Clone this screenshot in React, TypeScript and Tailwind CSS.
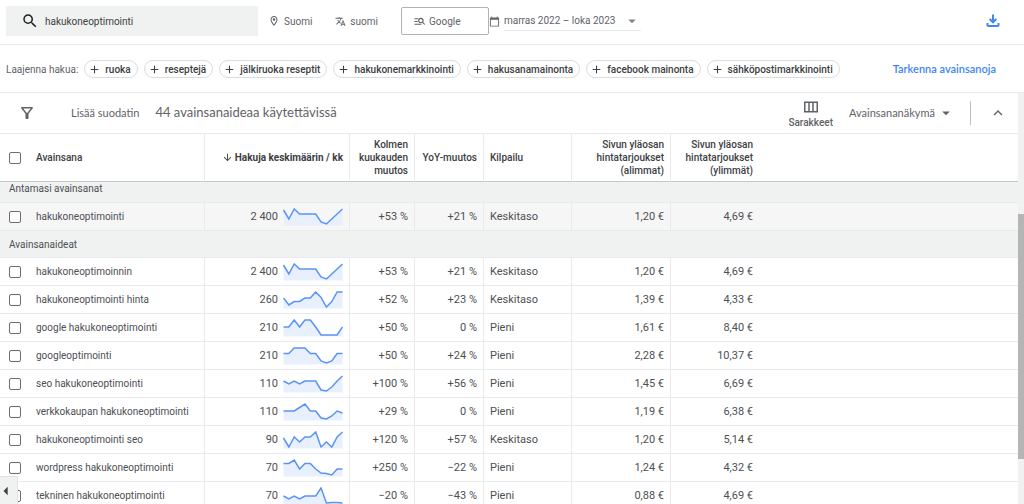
import clsx from "clsx";
import {
  MdAdd,
  MdArrowDownward,
  MdArrowDropDown,
  MdArrowLeft,
  MdCalendarToday,
  MdExpandLess,
  MdOutlineFilterAlt,
  MdOutlineLocationOn,
  MdSearch,
  MdTranslate,
} from "react-icons/md";

interface Keyword {
  name: string;
  searches: string;
  threeMonths: string;
  yoy: string;
  competition: string;
  lowBid: string;
  highBid: string;
  trend: number[];
}

const suggestions = [
  "ruoka",
  "reseptejä",
  "jälkiruoka reseptit",
  "hakukonemarkkinointi",
  "hakusanamainonta",
  "facebook mainonta",
  "sähköpostimarkkinointi",
];

const provided: Keyword[] = [
  {
    name: "hakukoneoptimointi",
    searches: "2 400",
    threeMonths: "+53 %",
    yoy: "+21 %",
    competition: "Keskitaso",
    lowBid: "1,20 €",
    highBid: "4,69 €",
    trend: [2, 11, 1, 6, 6, 6, 6, 14, 16, 11, 6, 1],
  },
];

const ideas: Keyword[] = [
  {
    name: "hakukoneoptimoinnin",
    searches: "2 400",
    threeMonths: "+53 %",
    yoy: "+21 %",
    competition: "Keskitaso",
    lowBid: "1,20 €",
    highBid: "4,69 €",
    trend: [2, 11, 1, 6, 6, 6, 6, 14, 16, 11, 6, 1],
  },
  {
    name: "hakukoneoptimointi hinta",
    searches: "260",
    threeMonths: "+52 %",
    yoy: "+23 %",
    competition: "Keskitaso",
    lowBid: "1,39 €",
    highBid: "4,33 €",
    trend: [7, 14, 10.5, 10.5, 7, 7, 1, 6.5, 16, 10.5, 1, 1],
  },
  {
    name: "google hakukoneoptimointi",
    searches: "210",
    threeMonths: "+50 %",
    yoy: "0 %",
    competition: "Pieni",
    lowBid: "1,61 €",
    highBid: "8,40 €",
    trend: [8, 8, 1, 8, 1, 1, 8, 16, 16, 16, 16, 8],
  },
  {
    name: "googleoptimointi",
    searches: "210",
    threeMonths: "+50 %",
    yoy: "+24 %",
    competition: "Pieni",
    lowBid: "2,28 €",
    highBid: "10,37 €",
    trend: [6.5, 6.5, 1, 1, 1, 6.5, 6.5, 14, 16, 14, 6.5, 6.5],
  },
  {
    name: "seo hakukoneoptimointi",
    searches: "110",
    threeMonths: "+100 %",
    yoy: "+56 %",
    competition: "Pieni",
    lowBid: "1,45 €",
    highBid: "6,69 €",
    trend: [6, 9, 6, 9, 6, 6, 6, 15, 16, 12, 6, 1],
  },
  {
    name: "verkkokaupan hakukoneoptimointi",
    searches: "110",
    threeMonths: "+29 %",
    yoy: "0 %",
    competition: "Pieni",
    lowBid: "1,19 €",
    highBid: "6,38 €",
    trend: [8, 8, 8, 4.5, 1, 8, 8, 15, 16, 13, 8, 10],
  },
  {
    name: "hakukoneoptimointi seo",
    searches: "90",
    threeMonths: "+120 %",
    yoy: "+57 %",
    competition: "Keskitaso",
    lowBid: "1,20 €",
    highBid: "5,14 €",
    trend: [7, 16, 6, 11, 6, 6, 1, 16, 11, 16, 6, 1],
  },
  {
    name: "wordpress hakukoneoptimointi",
    searches: "70",
    threeMonths: "+250 %",
    yoy: "−22 %",
    competition: "Pieni",
    lowBid: "1,24 €",
    highBid: "4,32 €",
    trend: [4.5, 4.5, 1, 10, 4.5, 4.5, 10, 14, 14.5, 16, 10, 10],
  },
  {
    name: "tekninen hakukoneoptimointi",
    searches: "70",
    threeMonths: "−20 %",
    yoy: "−43 %",
    competition: "Pieni",
    lowBid: "0,88 €",
    highBid: "4,69 €",
    trend: [9, 12, 9, 12, 9, 9, 9, 1, 16, 15.5, 15.5, 16],
  },
];

const Sparkline = ({ values }: { values: number[] }) => {
  const step = 59 / (values.length - 1);
  const points = values.map((v, i) => `${i * step + 0.5},${v}`).join(" ");

  return (
    <svg width="60" height="18" viewBox="0 0 60 18" className="shrink-0">
      <polygon points={`0.5,17.5 ${points} 59.5,17.5`} fill="#e8f0fe" />
      <polyline points={points} fill="none" stroke="#5b93f5" strokeWidth="1.5" />
    </svg>
  );
};

const SearchNetworkIcon = () => (
  <svg width="11" height="11" viewBox="0 0 24 24" fill="none" stroke="currentColor" strokeWidth="2.4">
    <path d="M1 6h8M1 12h7M1 18h15" />
    <circle cx="15" cy="10" r="4.8" />
    <path d="m18.3 13.5 5 5" />
  </svg>
);

const DownloadIcon = () => (
  <svg width="14" height="14" viewBox="0 0 14 14" fill="none" stroke="currentColor" strokeWidth="2">
    <path d="M7 0.5v7M3.7 5 7 8.3 10.3 5M1.5 9v2.2q0 .8.8.8h9.4q.8 0 .8-.8V9" />
  </svg>
);

const ColumnsIcon = () => (
  <svg width="14" height="12" viewBox="0 0 14 12" fill="none" stroke="currentColor" strokeWidth="1.5">
    <path d="M.75 1.25h12.5v9.5H.75zM5 1v10M9 1v10" />
  </svg>
);

const Checkbox = ({ label }: { label: string }) => (
  <input
    type="checkbox"
    aria-label={label}
    className="block size-3 appearance-none rounded-xs border border-[#6b6f73] bg-white checked:bg-[#1a73e8]"
  />
);

const cell = "border-b border-[#e8eaed] px-1.5";
const divided = "border-r";

const SectionRow = ({ title, first }: { title: string; first?: boolean }) => (
  <tr className={clsx("bg-[#f0f2f1]", first ? "h-[21px]" : "h-[27px]")}>
    <th
      colSpan={9}
      className={clsx("border-b border-[#e8eaed] px-[9px] text-left text-[10px] font-normal", first ? "pb-1.5" : "pt-0.5")}
    >
      {title}
    </th>
  </tr>
);

const KeywordRow = ({ item, shaded }: { item: Keyword; shaded?: boolean }) => (
  <tr className={clsx("h-7", shaded && "bg-[#f6f6f6]")}>
    <td className="border-b border-[#e8eaed] pl-[9px]">
      <Checkbox label={item.name} />
    </td>
    <td className={clsx(cell, divided, "text-[10px]")}>{item.name}</td>
    <td className={clsx(cell, divided)}>
      <div className="flex items-center justify-end gap-[5px]">
        {item.searches}
        <Sparkline values={item.trend} />
      </div>
    </td>
    <td className={clsx(cell, divided, "text-right")}>{item.threeMonths}</td>
    <td className={clsx(cell, divided, "text-right")}>{item.yoy}</td>
    <td className={clsx(cell, divided)}>{item.competition}</td>
    <td className={clsx(cell, divided, "text-right")}>{item.lowBid}</td>
    <td className={clsx(cell, "text-right")}>{item.highBid}</td>
    <td className={cell}></td>
  </tr>
);

const KeywordTable = () => {
  const head = "border-y border-t-[#e8eaed] border-b-[#c4c8cc] px-1.5 font-medium";

  return (
    <table className="w-full table-fixed border-separate border-spacing-0 whitespace-nowrap text-[11px] text-[#4d5054]">
      <colgroup>
        <col className="w-[30px]" />
        <col className="w-[175px]" />
        <col className="w-[145px]" />
        <col className="w-[65px]" />
        <col className="w-[69px]" />
        <col className="w-[88px]" />
        <col className="w-[99px]" />
        <col className="w-[88px]" />
        <col />
      </colgroup>
      <thead>
        <tr className="h-[49px] text-left text-[10px] leading-[13px] text-[#3c4043]">
          <th className="border-y border-t-[#e8eaed] border-b-[#c4c8cc] pl-[9px]">
            <Checkbox label="Valitse kaikki" />
          </th>
          <th className={clsx(head, "border-r border-r-[#e8eaed]")}>Avainsana</th>
          <th className={clsx(head, "border-r border-r-[#e8eaed]")}>
            <div className="flex items-center justify-end gap-0.5 font-bold">
              <MdArrowDownward size={11} />
              Hakuja keskimäärin / kk
            </div>
          </th>
          <th className={clsx(head, "border-r border-r-[#e8eaed] text-right")}>
            Kolmen
            <br />
            kuukauden
            <br />
            muutos
          </th>
          <th className={clsx(head, "border-r border-r-[#e8eaed] text-right")}>YoY-muutos</th>
          <th className={clsx(head, "border-r border-r-[#e8eaed]")}>Kilpailu</th>
          <th className={clsx(head, "border-r border-r-[#e8eaed] text-right")}>
            Sivun yläosan
            <br />
            hintatarjoukset
            <br />
            (alimmat)
          </th>
          <th className={clsx(head, "text-right")}>
            Sivun yläosan
            <br />
            hintatarjoukset
            <br />
            (ylimmät)
          </th>
          <th className={head}></th>
        </tr>
      </thead>
      <tbody className="leading-[14px]">
        <SectionRow title="Antamasi avainsanat" first />
        {provided.map((item) => (
          <KeywordRow key={item.name} item={item} shaded />
        ))}
        <SectionRow title="Avainsanaideat" />
        {ideas.map((item) => (
          <KeywordRow key={item.name} item={item} />
        ))}
      </tbody>
    </table>
  );
};

const TopBar = () => (
  <header className="flex items-center whitespace-nowrap border-b border-[#e8eaed] pt-1.5 pr-6 pb-2 pl-1.5 text-[10px] text-[#5f6368]">
    <label className="flex h-[30px] w-[252px] items-center gap-1.5 bg-[#f0f2f1] pl-[15px] text-[#3c4043]">
      <MdSearch size={18} className="text-[#202124]" />
      <input
        type="text"
        aria-label="Avainsanat"
        defaultValue="hakukoneoptimointi"
        className="min-w-0 flex-1 bg-transparent outline-none"
      />
    </label>
    <button className="ml-2.5 flex items-center gap-1">
      <MdOutlineLocationOn size={12} />
      Suomi
    </button>
    <button className="ml-[23px] flex items-center gap-1">
      <MdTranslate size={11} />
      suomi
    </button>
    <button className="ml-[23px] flex h-7 w-[88px] items-center gap-1 rounded-xs border border-[#b0b3b6] pl-3">
      <SearchNetworkIcon />
      Google
    </button>
    <button className="flex items-center gap-1">
      <MdCalendarToday size={11} />
      <span className="flex w-[137px] items-center justify-between border-b border-[#e8eaed]">
        marras 2022 – loka 2023
        <MdArrowDropDown size={18} className="text-[#80868b]" />
      </span>
    </button>
    <button aria-label="Lataa" className="ml-auto text-[#4285f4]">
      <DownloadIcon />
    </button>
  </header>
);

const Suggestions = () => (
  <div className="flex items-center gap-1.5 border-b border-[#e8eaed] pt-[15px] pr-7 pb-3.5 pl-1.5 text-[10px] text-[#3c4043]">
    <span className="whitespace-nowrap text-[#5f6368]">Laajenna hakua:</span>
    {suggestions.map((text) => (
      <button
        key={text}
        className="flex h-[18px] items-center gap-1 whitespace-nowrap rounded-full border border-[#dadce0] pr-1.5 pl-[3px] font-medium"
      >
        <MdAdd size={13} />
        {text}
      </button>
    ))}
    <a href="#tarkenna" className="ml-auto whitespace-nowrap font-['Lato',sans-serif] text-[11px] font-semibold text-[#4285f4]">
      Tarkenna avainsanoja
    </a>
  </div>
);

const Toolbar = () => (
  <div className="flex h-10 items-center whitespace-nowrap pr-[11px] pl-[18px] font-['Lato',sans-serif] text-[11px] text-[#5f6368]">
    <button aria-label="Suodata">
      <MdOutlineFilterAlt size={18} />
    </button>
    <button className="ml-[35px]">Lisää suodatin</button>
    <span className="ml-4 text-[13px]">44 avainsanaideaa käytettävissä</span>
    <button className="ml-auto flex flex-col items-center gap-1 pt-1 font-['Roboto',sans-serif] text-[10px] leading-3 font-medium">
      <ColumnsIcon />
      Sarakkeet
    </button>
    <button className="ml-4 flex items-center gap-0.5">
      Avainsananäkymä
      <MdArrowDropDown size={18} />
    </button>
    <span className="ml-[15px] h-6 w-px bg-[#bdc1c6]" />
    <button aria-label="Tiivistä" className="ml-[18px]">
      <MdExpandLess size={18} />
    </button>
  </div>
);

const App = () => {
  return (
    <div className="relative flex h-screen flex-col overflow-hidden bg-white font-['Roboto',sans-serif]">
      <TopBar />
      <Suggestions />
      <div className="flex min-h-0 flex-1">
        <main className="min-w-0 flex-1 overflow-hidden">
          <Toolbar />
          <KeywordTable />
        </main>
        <div className="flex w-1.5 flex-col bg-[#f0f2f1]">
          <div className="flex-[121]" />
          <div className="flex-[246] bg-[#b4b5b6]" />
          <div className="flex-[45]" />
        </div>
      </div>
      <button
        aria-label="Näytä valikko"
        className="absolute bottom-0 left-0 flex h-7 w-[18px] items-center justify-center border-t border-r border-[#e0e2e3] bg-[#f0f2f1] text-[#3c4043]"
      >
        <MdArrowLeft size={20} className="-ml-1.5 shrink-0" />
      </button>
    </div>
  );
};

export default App;
